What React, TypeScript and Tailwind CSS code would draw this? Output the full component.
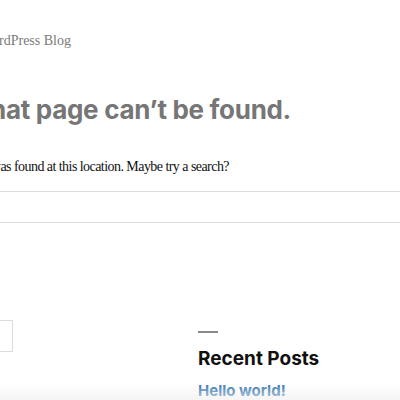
export default function App() {
    return (
        <div className="relative w-[400px] h-[400px] overflow-hidden bg-white">
            <header className="pt-[32px]">
                <div className="flex justify-end w-[71px] whitespace-nowrap">
                    <p className="text-[14px] leading-[18px] text-[#7a7a7a] font-['Liberation_Serif',serif]">
                        My WordPress Blog
                    </p>
                </div>
            </header>
            <main>
                <div className="flex justify-end w-[291px] whitespace-nowrap mt-[42px]">
                    <h1 className="text-[26px] leading-[36px] font-bold tracking-[-0.3px] text-[#767676] font-['Inter',sans-serif]">
                        Oops! That page can’t be found.
                    </h1>
                </div>
                <div className="flex justify-end w-[229px] whitespace-nowrap mt-[30px]">
                    <p className="text-[14px] leading-[18px] tracking-[-0.55px] text-[#111] font-['Liberation_Serif',serif]">
                        It looks like nothing was found at this location. Maybe try a search?
                    </p>
                </div>
                <div className="ml-[-20px] mr-[-20px] mt-[15px] h-[32px] border border-[#dcdcdc]" />
            </main>
            <footer className="flex mt-[96px]">
                <div className="ml-[-200px] w-[213px] shrink-0 pt-[1px]">
                    <div className="h-[32px] border border-[#dcdcdc]" />
                </div>
                <div className="ml-[185px]">
                    <div className="w-[20px] h-[2px] bg-[#8a8a8a] mt-[12px]" />
                    <h2 className="mt-[14px] text-[19px] leading-[24px] font-bold text-[#111] font-['Inter',sans-serif]">
                        Recent Posts
                    </h2>
                    <a className="block mt-[11px] text-[15px] leading-[18px] font-bold text-[#3a7ab3] font-['Inter',sans-serif]">
                        Hello world!
                    </a>
                </div>
            </footer>
            <div className="pointer-events-none absolute left-0 right-0 bottom-0 h-[16px] bg-gradient-to-b from-transparent to-[#f0f0f0]/70" />
        </div>
    );
}
